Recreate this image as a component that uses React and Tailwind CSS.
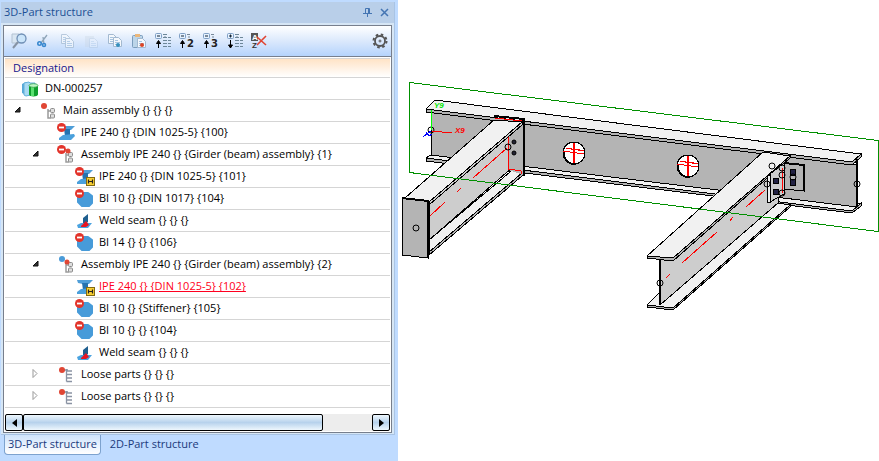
const TREE = [
  { label: 'DN-000257', icon: 'folder', level: 0 },
  { label: 'Main assembly {} {} {}', icon: 'group', level: 1, dot: 'red', toggle: 'open' },
  { label: 'IPE 240 {} {DIN 1025-5} {100}', icon: 'beam', level: 2, minus: true },
  { label: 'Assembly IPE 240 {} {Girder (beam) assembly} {1}', icon: 'group', level: 2, dot: 'red', minus: true, toggle: 'open' },
  { label: 'IPE 240 {} {DIN 1025-5} {101}', icon: 'beam', level: 3, minus: true, main: true },
  { label: 'BI 10 {} {DIN 1017} {104}', icon: 'plate', level: 3, minus: true },
  { label: 'Weld seam {} {} {}', icon: 'weld', level: 3 },
  { label: 'BI 14 {} {} {106}', icon: 'plate', level: 3, minus: true },
  { label: 'Assembly IPE 240 {} {Girder (beam) assembly} {2}', icon: 'group', level: 2, dot: 'both', toggle: 'open' },
  { label: 'IPE 240 {} {DIN 1025-5} {102}', icon: 'beam', level: 3, main: true, selected: true },
  { label: 'BI 10 {} {Stiffener} {105}', icon: 'plate', level: 3, minus: true },
  { label: 'BI 10 {} {} {104}', icon: 'plate', level: 3, minus: true },
  { label: 'Weld seam {} {} {}', icon: 'weld', level: 3 },
  { label: 'Loose parts {} {} {}', icon: 'list', level: 2, dot: 'red', toggle: 'closed' },
  { label: 'Loose parts {} {} {}', icon: 'list', level: 2, dot: 'red', toggle: 'closed' },
];

const INDENT = ['pl-4', 'pl-[34px]', 'pl-[52px]', 'pl-[70px]'];
const TOGGLE_INDENT = ['pl-0', 'pl-1', 'pl-[22px]', 'pl-10'];

function RowIcon({ icon, minus, main, dot }) {
  return (
    <svg width="20" height="20" viewBox="0 0 20 20" className="shrink-0">
      {icon === 'folder' && (
        <g>
          <path d="M1 5l4-2v13l-4-2z" fill="#58a9d8" />
          <path d="M3 4l5-1 1 1h5v11l-9 2-2-1z" fill="#a9daf3" stroke="#62b0da" strokeWidth="1" />
          <path d="M8 6.500v9c0 2.500 9 2.500 9 0v-9z" fill="#0f9f2c" />
          <path d="M10 7v10h3V7z" fill="#5be070" />
          <ellipse cx="12.500" cy="6.500" rx="4.500" ry="1.800" fill="#bff5c4" stroke="#2a9a3c" strokeWidth=".7" />
        </g>
      )}
      {icon === 'group' && (
        <g>
          <path d="M9 8v9h3M9 10h4" fill="none" stroke="#9b9b9b" strokeWidth="1.500" />
          <rect x="11.500" y="7.500" width="4" height="4" rx="1" fill="#ddd" stroke="#8b8b8b" />
          <rect x="11.500" y="13" width="4" height="4" rx="1" fill="#ddd" stroke="#8b8b8b" />
        </g>
      )}
      {icon === 'list' && <path d="M6 5h5M9.500 4v12.500M9.500 6H15M9.500 9.500H15M9.500 13H15M9.500 16.500H15" fill="none" stroke="#8a93a3" strokeWidth="1.300" />}
      {icon === 'beam' && (
        <g>
          <path d="M2 3h16l-4 4H8l-5-1z" fill="#4f9ed8" />
          <path d="M7 6h6v7H8z" fill="#2573b0" />
          <path d="M6 12l11-1 1 2-4 4H2v-2z" fill="#4aa0dc" />
        </g>
      )}
      {icon === 'plate' && <path d="M6 4h7l4 3v7l-3 3H7l-4-4V7z" fill="#479bd9" stroke="#479bd9" strokeWidth="2" strokeLinejoin="round" />}
      {icon === 'weld' && (
        <g>
          <path d="M8 7l5-4v8l-5 4z" fill="#1f5f8f" />
          <path d="M2 14l4-2 11 0-4 5H3z" fill="#4aa3e0" />
          <path d="M6 15l5-5 3 4-3 2H6z" fill="#e81522" />
        </g>
      )}
      {dot === 'red' && !minus && <circle cx="5" cy="5" r="3" fill="#e04634" />}
      {dot === 'red' && minus && <circle cx="11" cy="6" r="2.500" fill="#e04634" />}
      {dot === 'both' && (
        <g>
          <circle cx="5" cy="4" r="3" fill="#4a9bd8" />
          <circle cx="10" cy="7" r="2.500" fill="#e04634" />
        </g>
      )}
      {minus && (
        <g>
          <circle cx="4.500" cy="4.500" r="4.500" fill="#e3342b" />
          <path d="M2 4.500h5" stroke="#fff" strokeWidth="1.800" />
        </g>
      )}
      {main && (
        <g>
          <rect x="11.500" y="10.500" width="8" height="8" fill="#f8cf32" stroke="#806a15" />
          <path d="M13.500 12.500v4M17.500 12.500v4M13.500 14.500h4" stroke="#222" strokeWidth="1.200" />
        </g>
      )}
    </svg>
  );
}

function Toggle({ state }) {
  return (
    <button aria-label="Toggle node" className="w-4 h-5 shrink-0 flex items-center justify-center">
      <svg width="8" height="12" viewBox="0 0 8 12">
        {state === 'open' ? <path d="M7 2v5H2z" fill="#333" stroke="#111" /> : <path d="M2 0.500l4 4-4 4z" fill="#fff" stroke="#999" />}
      </svg>
    </button>
  );
}

function TreeRow({ row }) {
  return (
    <li className="h-[22px] border-b border-[#d5d5d5] flex items-center">
      {row.toggle ? (
        <div className={TOGGLE_INDENT[row.level]}>
          <Toggle state={row.toggle} />
        </div>
      ) : (
        <div className={INDENT[row.level]} />
      )}
      {row.toggle && <div className="w-[14px]" />}
      <RowIcon {...row} />
      <span className={row.selected ? 'ml-1 text-[#ff0020] underline' : 'ml-1'}>{row.label}</span>
    </li>
  );
}

function TreeOp({ sign, digit }) {
  return (
    <g>
      <rect x="0.500" y="0.500" width="6" height="5" rx="1" fill="#e6f2ff" stroke="#7f9fc4" />
      <path d="M2 3h3" stroke="#123" />
      <path d="M8 1.500h3M9 4h2" stroke="#789" />
      {sign === '+' && <path d="M3.500 1.500v3" stroke="#123" />}
      {sign === '+' ? <path d="M3.500 7v8M1.500 12l2 3 2-3z" stroke="#000" fill="#000" /> : <path d="M3.500 15V8M1.500 10.500l2-3 2 3z" stroke="#000" fill="#000" />}
      {digit ? (
        <text x="8" y="14" fontSize="10" fontWeight="700" fontFamily="DejaVu Sans, sans-serif" fill="#222">{digit}</text>
      ) : (
        <path d="M8 4.500h8M8 7.500h8M8 10.500h8M8 13.500h8M8 1.500h4" stroke="#6d8798" strokeDasharray="4 1 3 1" />
      )}
    </g>
  );
}

function Sheet({ x, y }) {
  return (
    <g transform={`translate(${x} ${y})`}>
      <path d="M.5.5h5l3 3v6h-8z" fill="#f4f8fc" stroke="#a3b9d0" />
      <path d="M2 3.500h3M2 5.500h5M2 7.500h5" stroke="#a7c4e0" />
    </g>
  );
}

const TOOLS = [
  { name: 'Search', art: (
    <g>
      <path d="M1 1h7v9H1z" fill="#d9e6f2" stroke="#b3c2d2" />
      <circle cx="10.500" cy="5.500" r="4.500" fill="#cbe5fa" stroke="#6f8fb5" strokeWidth="1.300" />
      <path d="M7 9l-5 6" stroke="#8794a5" strokeWidth="2" />
    </g>
  ) },
  { name: 'Cut', art: (
    <g fill="none">
      <path d="M12 2L6 10M8 4l1 7" stroke="#8fa5b8" strokeWidth="1.300" />
      <circle cx="4.500" cy="10.500" r="1.700" stroke="#3888cf" strokeWidth="1.600" />
      <circle cx="9" cy="12" r="1.500" stroke="#3888cf" strokeWidth="1.600" />
    </g>
  ) },
  { name: 'Copy', dim: true, art: <g><Sheet x={2} y={1} /><Sheet x={6} y={5} /></g> },
  { name: 'Paste', faint: true, art: <g><path d="M2 3h9v11H2z" fill="#c7d3df" /><Sheet x={6} y={5} /></g> },
  { name: 'Copy special', art: <g><Sheet x={1} y={1} /><Sheet x={6} y={4} /><circle cx="11" cy="12" r="2" fill="#3590bd" /></g> },
  { name: 'Paste special', art: (
    <g>
      <rect x="1.500" y="2.500" width="10" height="12" rx="1" fill="#bcd5e9" stroke="#7b9dbd" />
      <path d="M4 1h5v3H4z" fill="#eab77c" />
      <Sheet x={6} y={5} />
      <circle cx="11" cy="12" r="2" fill="#db4526" />
    </g>
  ) },
  { name: 'Collapse all', art: <TreeOp sign="-" /> },
  { name: 'Level 2', art: <TreeOp sign="-" digit="2" /> },
  { name: 'Level 3', art: <TreeOp sign="-" digit="3" /> },
  { name: 'Expand all', art: <TreeOp sign="+" /> },
  { name: 'Remove sorting', art: (
    <g fontFamily="Liberation Sans, sans-serif" fontWeight="700">
      <rect width="7" height="8" fill="#555" />
      <text x="1" y="7" fontSize="8" fill="#fff">A</text>
      <text x="1" y="15" fontSize="8" fill="#333">Z</text>
      <path d="M6 4l9 8M15 3L6 12" stroke="#e04432" strokeWidth="1.600" />
    </g>
  ) },
];

function Toolbar() {
  return (
    <div className="h-[31px] flex items-center gap-2 pl-[7px] pr-[3px] bg-linear-to-b from-white via-[#dbe9fc] to-[#b5d3fc] border-b border-[#777f8d]">
      {TOOLS.map(t => (
        <button key={t.name} aria-label={t.name} className={t.faint ? 'opacity-30' : t.dim ? 'opacity-70' : ''}>
          <svg width="16" height="16" viewBox="0 0 16 16">{t.art}</svg>
        </button>
      ))}
      <button aria-label="Settings" className="ml-auto">
        <svg width="16" height="16" viewBox="0 0 16 16" fill="none" stroke="#555">
          <circle cx="8" cy="8" r="6.500" strokeWidth="2" strokeDasharray="2.550 2.550" />
          <circle cx="8" cy="8" r="5" strokeWidth="1.800" />
          <circle cx="8" cy="8" r="1" />
        </svg>
      </button>
    </div>
  );
}

function Scrollbar() {
  const btn = 'w-[18px] shrink-0 border border-black rounded-xs bg-linear-to-b from-[#eef7fd] via-[#b7d2ec] to-[#eef7fd] flex items-center justify-center';
  return (
    <div className="h-[17px] flex bg-[#ededed]">
      <button aria-label="Scroll left" className={btn}>
        <svg width="5" height="8"><path d="M5 0v8L0 4z" /></svg>
      </button>
      <div className="flex-1 flex">
        <div className="w-[86%] border border-black rounded-xs bg-linear-to-b from-[#eef7fd] via-[#b7d2ec] to-[#eef7fd]" />
      </div>
      <button aria-label="Scroll right" className={btn}>
        <svg width="5" height="8"><path d="M0 0v8l5-4z" /></svg>
      </button>
    </div>
  );
}

function StructurePanel() {
  return (
    <aside className="w-[398px] shrink-0 bg-[#bfdbff] pt-[2px] flex flex-col">
      <div className="bg-[#d6e6f5] border-r border-b border-[#a9c4e4] ml-px mr-[3px]">
        <div className="h-[21px] bg-[#b9cfe9] flex items-center pl-[3px] pr-[5px] text-[#1c4f94]">
          <h1 className="flex-1">3D-Part structure</h1>
          <button aria-label="Pin" className="w-3">
            <svg width="9" height="9" viewBox="0 0 9 9" fill="none" stroke="#4475b3">
              <path d="M2.500 5V.5h4V5M0 5.500h9M4.500 6v3M5.500 1v4" />
            </svg>
          </button>
          <button aria-label="Close" className="w-[14px] flex justify-end">
            <svg width="9" height="9" viewBox="0 0 9 9"><path d="M1 1l7 7M8 1L1 8" stroke="#4475b3" strokeWidth="1.500" /></svg>
          </button>
        </div>
        <div className="mt-[2px] mx-[2px] mb-px border border-[#777f8d] bg-white">
          <Toolbar />
          <div className="p-px">
            <h2 className="h-[20px] pl-2 flex items-center border-t border-b border-[#d5d5d5] bg-linear-to-b from-[#ffe3c6] to-white text-[#14148c]">Designation</h2>
            <ul className="pb-[6px]">
              {TREE.map((row, i) => <TreeRow key={i} row={row} />)}
            </ul>
            <Scrollbar />
          </div>
        </div>
      </div>
      <nav className="flex h-5 ml-1 text-[#1a3a7c] leading-[18px]">
        <a href="#3d" className="px-[3px] rounded-b-sm border border-t-0 border-[#7da2ce] bg-linear-to-b from-[#cfe3fb] to-white">3D-Part structure</a>
        <a href="#2d" className="px-[9px]">2D-Part structure</a>
      </nav>
    </aside>
  );
}

const DARK = '#b4b4b4';
const MID = '#cdcdcd';
const LIGHT = '#f1f1f1';

const SNAP_POINTS = [
  [416, 228], [508, 147], [431, 130], [660, 283], [857, 184], [772, 166],
  [782, 168], [782, 175], [767, 184], [782, 193], [793, 177],
];

function Hole({ x, y }) {
  return (
    <g transform={`translate(${x} ${y})`}>
      <circle r="11" fill="#fff" />
      <path d="M-10-2A11 11 0 0 0 2 11" strokeWidth="2" fill="none" />
      <path d="M0-10V10" strokeWidth="2" stroke="#f00" />
      <path d="M-11-2L10 1M-8-5L10-2M-3-4L6-3" stroke="#f00" />
    </g>
  );
}

function ModelView() {
  return (
    <main className="flex-1 min-w-0 bg-white">
      <svg viewBox="398 0 481 461" className="w-full" role="img" aria-label="Steel frame model" shapeRendering="crispEdges" stroke="#000" strokeWidth="1">
        {/* cross beam */}
        <path d="M431 112L857 165V207L431 155z" fill={DARK} />
        <path d="M431 155L857 207V203H861L852 211L426 158z" fill={LIGHT} />
        <path d="M426 158L852 211L861 203V206L852 213L426 161z" fill={DARK} />
        <path d="M435 100L861 154L852 162L426 109z" fill={LIGHT} />
        <path d="M426 109L852 162L861 154V157L852 165L426 112z" fill={DARK} />
        <path d="M857 159V207" strokeWidth="2" />
        <Hole x={574} y={153} />
        <Hole x={688} y={166} />

        {/* left girder */}
        <path d="M429 240L522 162V173L429 252z" fill={LIGHT} />
        <path d="M429 252L522 173V176L429 255z" fill={DARK} />
        <path d="M429 205L522 125V159L429 240z" fill={MID} />
        <path d="M508 136L524 121V175L508 170z" fill={DARK} stroke="none" />
        <path d="M405 198L494 120L522 122L429 202z" fill={LIGHT} />
        <path d="M429 202L522 122V125L429 205z" fill={MID} />
        <path d="M508 137V169L521 171V174M495 118L522 121" stroke="#f00" fill="none" />
        <path d="M494 116L524 119V176" strokeWidth="2" fill="none" />
        <g fill="#223" shapeRendering="geometricPrecision">
          <circle cx="514" cy="142" r="2" />
          <circle cx="514" cy="153" r="2" />
        </g>
        <path d="M507 148L473 178M461 188L457 192M445 202L430 216" stroke="#f00" />
        <path d="M402 198L428 201V258L402 255z" fill={DARK} />
        <path d="M402 198L428 201V258" strokeWidth="2" fill="none" />

        {/* right girder */}
        <path d="M660 292L647 305L673 308L790 205L778 203z" fill={LIGHT} />
        <path d="M647 305L673 308L790 205V207L673 310L647 307z" fill={DARK} />
        <path d="M660 259L778 155V203L660 305z" fill={MID} />
        <path d="M647 256L763 152L790 156L673 258z" fill={LIGHT} />
        <path d="M647 256L673 258L790 156V158L673 261L647 258z" fill={DARK} />
        <path d="M660 259V305" strokeWidth="2" />
        <path d="M765 190L746 207M733 217L730 221M717 232L682 263M670 274L666 278" stroke="#f00" />

        {/* cleat */}
        <path d="M784 163L804 165V191L784 189z" fill={DARK} />
        <path d="M784 163L804 165V191" strokeWidth="2" fill="none" />
        <path d="M770 174L784 163V194L770 202z" fill={MID} />
        <path d="M767 175H770V202H767z" fill={LIGHT} />
        <path d="M782 168V193" stroke="#f00" />
        <path d="M790 169h5v6h-5zM790 179h5v6h-5zM773 178h5v5h-5zM773 189h5v5h-5z" fill="#224" />

        <path d="M409.500 82.500L878 140.500V231.500L409.500 172.500z" fill="none" stroke="#009000" />

        <g fill="none" shapeRendering="geometricPrecision">
          {SNAP_POINTS.map(([x, y]) => (
            <circle key={`${x}-${y}`} cx={x} cy={y} r="3" />
          ))}
        </g>

        {/* coordinate axes */}
        <path d="M431.500 110V130" stroke="#0f0" />
        <path d="M432 131L452 133" stroke="#f00" />
        <path d="M431 131L423 137M426 132L429 136L432 134" stroke="#00f" fill="none" />
        <g stroke="none" fontSize="8" fontWeight="700" fontStyle="italic" fontFamily="Liberation Sans, sans-serif">
          <text x="434" y="108" fill="#00e600">Y9</text>
          <text x="455" y="133" fill="#f00">X9</text>
        </g>
      </svg>
    </main>
  );
}

export default function App() {
  return (
    <div className="min-h-screen flex bg-white text-[11px] font-['Open_Sans','Noto_Sans',sans-serif]">
      <StructurePanel />
      <ModelView />
    </div>
  );
}
